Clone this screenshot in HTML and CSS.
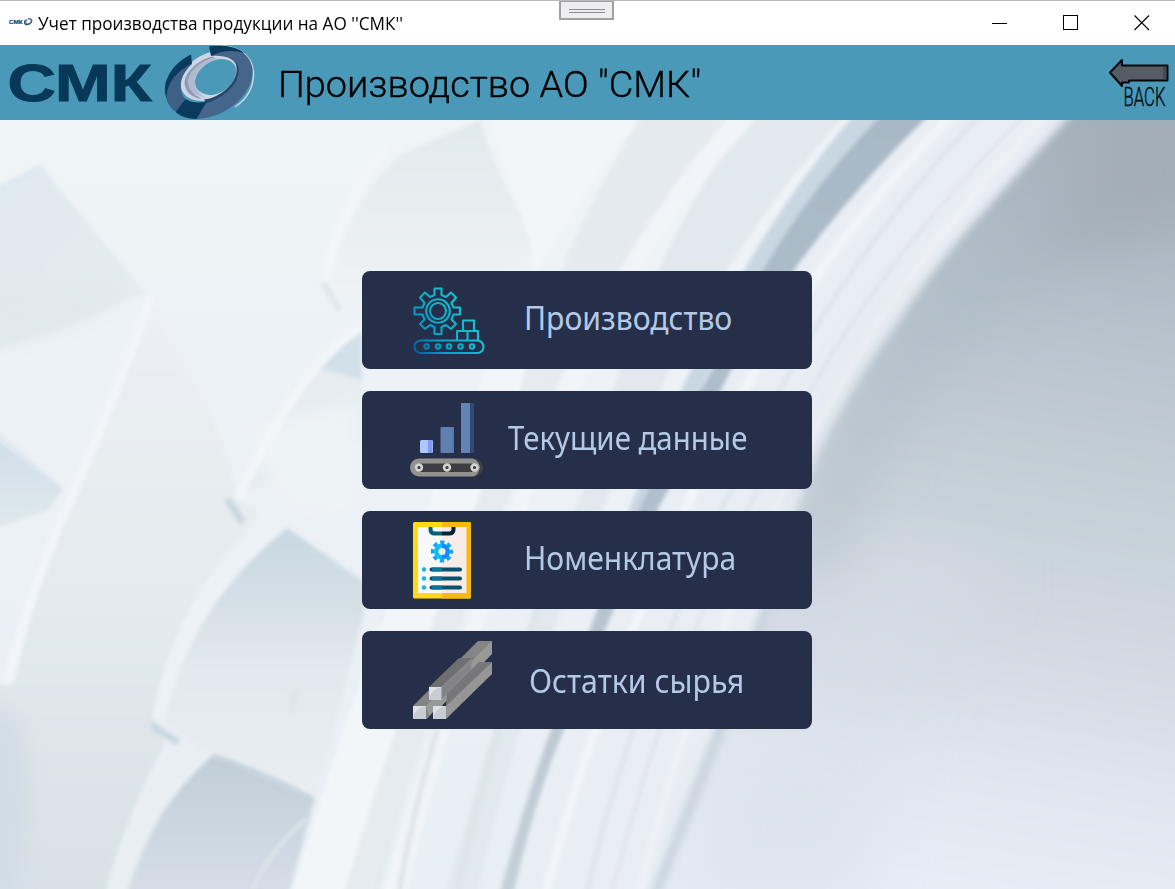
FILE: index.html
```html
<!DOCTYPE html>
<html lang="ru">
<head>
<meta charset="utf-8">
<title>Учет производства продукции на АО ''СМК''</title>
<link rel="stylesheet" href="styles.css">
</head>
<body>
<div class="window">
  <header class="titlebar">
    <svg class="app-icon" viewBox="0 0 250 80"><use href="#logo"/></svg>
    <span class="window-title"><span class="fit" id="t0">Учет производства продукции на АО ''СМК''</span></span>
    <div class="handle"><i></i><i></i></div>
    <div class="controls">
      <svg width="16" height="16" viewBox="0 0 16 16" shape-rendering="crispEdges"><path d="M0 8.5h15" stroke="#000"/></svg>
      <svg width="16" height="16" viewBox="0 0 16 16" shape-rendering="crispEdges"><path d="M.5 .5h14v14h-14z" fill="none" stroke="#000"/></svg>
      <svg width="16" height="16" viewBox="0 0 16 16"><path d="M.5 .5l14.500 14.500M15 .5L.5 15" stroke="#000" stroke-width="1.100"/></svg>
    </div>
  </header>

  <div class="banner">
    <svg class="logo" width="250" height="75" viewBox="0 0 250 75">
      <defs>
        <g id="logo">
          <text x="-1.500" y="56" class="logo-text" textLength="144" lengthAdjust="spacingAndGlyphs">СМК</text>
          <path fill="none" stroke="#c9d3e2" stroke-width="1.500" d="M206 1C226 -1 243 9 244.500 27C245 42 238 54 226 62"/>
          <path fill="#ced6e4" fill-rule="evenodd" d="M202 7C186 11 172 24 171.500 39C172 50 181 56 194 56C214 55 230 40 230 24C229 12 216 6 202 7ZM212 14C222 14 228 19 227 28C225 40 213 50 201 50C192 49 186 45 186 37C187 25 199 15 212 14Z"/>
          <path fill="#8e9bb7" d="M203 11.500C189 15 176 27 175.500 38C176 47 183 53 193 54C184 49 179 44 180 37C181 27 192 17 206 13Z"/>
          <path fill="#b0bacd" d="M203 13C190 17 178 28 179 38C180 46 187 51 197 52.500C190 49 186 45 186 37C187 25 199 15 212 14Z"/>
          <path fill="#45658a" d="M201 3C224 -2 241 7 243.500 24C245 48 219 73 187 74L198 56.500C216 53 229 38 228.500 24C227 13 215 10 203 11Z"/>
          <path fill="#26476b" d="M226 16C230 20 231 28 227 36C221 47 209 55 197 58L195 54.500C211 53 226 39 227.500 27C228 22 227 19 226 16Z"/>
          <path fill="#0a3a5d" d="M200 1.500C214 -1 228 2 235 8C225 5 213 5 202 11Z"/>
          <path fill="#0a3a5d" d="M182 9.500C166 17 155 32 156 47C157 54 160 60 166 66L170 59C165 49 166 30 183 18.500Z"/>
          <path fill="#3e6085" d="M183 18.500C163 28 156 45 158 55C160 61 163 65 167 67L176.500 54C169 45 170 31 183 19Z"/>
          <path fill="#0a3a5d" d="M176.500 54C183 58 191 58 198 56.500L187.500 74C178 74 171 71 166.500 67Z"/>
        </g>
      </defs>
      <use href="#logo"/>
    </svg>
    <h1 class="heading"><span class="fit" id="t1">Производство АО "СМК"</span></h1>
    <button class="back" aria-label="BACK">
      <svg width="66" height="56" viewBox="0 0 66 56">
        <path d="M1 14.500L13 2V7.500H58.500V22.500H20V24.500H13V28Z" fill="#565c64" stroke="#04080d" stroke-width="2" stroke-linejoin="round"/>
        <path d="M55.500 9V21.500" stroke="#3a424b" stroke-width="2"/>
        <text x="14.500" y="48" class="back-text" textLength="42" lengthAdjust="spacingAndGlyphs">BACK</text>
      </svg>
    </button>
  </div>

  <main class="stage">
    <svg class="backdrop" viewBox="0 120 1175 769" preserveAspectRatio="none" aria-hidden="true">
      <defs>
        <linearGradient id="base" x1="0" y1="0" x2="0" y2="1"><stop offset="0" stop-color="#eff4f7"/><stop offset=".5" stop-color="#ecf1f6"/><stop offset="1" stop-color="#e8eff5"/></linearGradient>
        <linearGradient id="inner" gradientUnits="userSpaceOnUse" x1="1080" y1="120" x2="960" y2="889"><stop offset="0" stop-color="#a5b1bb"/><stop offset=".13" stop-color="#adb9c4"/><stop offset=".3" stop-color="#b9c5cf"/><stop offset=".5" stop-color="#c7d1da"/><stop offset=".68" stop-color="#d3dae4"/><stop offset=".85" stop-color="#dfe6ef"/><stop offset="1" stop-color="#e5edf5"/></linearGradient>
        <linearGradient id="blade" x1="0" y1="0" x2="0" y2="1"><stop offset="0" stop-color="#c7d7e1"/><stop offset=".3" stop-color="#d6e0e6"/><stop offset=".5" stop-color="#e2e8ed"/><stop offset="1" stop-color="#e9eef3"/></linearGradient>
        <linearGradient id="blade2" x1="0" y1="0" x2="0" y2="1"><stop offset="0" stop-color="#c0ced8"/><stop offset="1" stop-color="#d7dee8"/></linearGradient>
        <linearGradient id="fin" x1="0" y1="0" x2="1" y2="1"><stop offset="0" stop-color="#dfe9f0"/><stop offset="1" stop-color="#e6ecef"/></linearGradient>
        <linearGradient id="topfin" x1="0" y1="0" x2="0" y2="1"><stop offset="0" stop-color="#e2e9ec"/><stop offset="1" stop-color="#eff3f6"/></linearGradient>
        <linearGradient id="corner" x1="0" y1="0" x2="0" y2="1"><stop offset="0" stop-color="#cfdee8"/><stop offset="1" stop-color="#e0e8eb"/></linearGradient>
        <linearGradient id="wide" gradientUnits="userSpaceOnUse" x1="0" y1="310" x2="0" y2="889"><stop offset="0" stop-color="#ecf0f4"/><stop offset=".5" stop-color="#e4eaee"/><stop offset="1" stop-color="#d8e1e6"/></linearGradient>
        <linearGradient id="stripe" gradientUnits="userSpaceOnUse" x1="0" y1="120" x2="0" y2="889"><stop offset="0" stop-color="#a9b8c6"/><stop offset=".5" stop-color="#b1bfcc"/><stop offset="1" stop-color="#c4d0d8"/></linearGradient>
        <filter id="b2"><feGaussianBlur stdDeviation="2.200"/></filter>
        <filter id="b5"><feGaussianBlur stdDeviation="4"/></filter>
        <filter id="b10" x="-20%" y="-20%" width="140%" height="140%"><feGaussianBlur stdDeviation="10"/></filter>
        <filter id="b20" x="-50%" y="-50%" width="200%" height="200%"><feGaussianBlur stdDeviation="28"/></filter>
      </defs>
      <rect x="0" y="120" width="1175" height="769" fill="url(#base)"/>

      <!-- left blades -->
      <g filter="url(#b2)">
        <path fill="url(#fin)" d="M-10 194L42 168L145 292L60 330L-10 350Z"/>
        <path fill="url(#wide)" d="M150 305Q215 400 238 498L285 530Q190 620 155 720L165 745Q120 820 112 900H-10V690L15 680Q40 560 75 490Q110 410 150 305Z"/>
        <path fill="url(#corner)" d="M-10 433L62 490L48 510L-10 530Z"/>
        <path fill="url(#topfin)" d="M330 280Q350 200 400 155L480 120Q500 190 545 250L500 275L362 310Z"/>
        <path fill="#e3eaee" d="M362 328Q320 350 300 390Q260 450 240 495L362 440V328Z" opacity=".6"/>
        <path fill="#d2e0e9" d="M362 328Q330 350 318 368L362 380Z"/>
        <path fill="url(#blade)" d="M287 528L370 586L352 660L315 797Q260 760 212 755L163 723Q185 610 287 528Z"/>
        <path fill="url(#blade2)" d="M212 756Q265 775 314 800L287 900H122Q150 810 212 756Z"/>
        <path fill="#edf2f6" d="M240 540L262 510L287 528Q190 605 165 720L152 717Q175 605 240 540Z"/>
        <path fill="#e9eff3" d="M183 742L210 750Q155 805 124 900H104Q125 800 183 742Z"/>
      </g>
      <g filter="url(#b10)">
        <path fill="#d2dbe6" d="M-20 700L20 720L30 800L15 900H-20Z"/>
        <path fill="#e0e7eb" d="M-10 290L130 295L60 330L-10 350Z" opacity=".7"/>
        <path fill="#eef3f6" d="M240 430L360 400V520L290 510Z"/>
      </g>
      <g filter="url(#b2)" fill="none" stroke-linecap="round">
        <path d="M150 300Q110 410 70 500Q30 590 8 680" stroke="#f1f5f9" stroke-width="10"/>
        <path d="M385 150Q340 205 325 280M360 328Q300 365 240 495" stroke="#f2f6f9" stroke-width="9"/>
        <path d="M324 284L338 308" stroke="#dce5e7" stroke-width="5"/>
        <path d="M229 502L241 520M154 727L176 741" stroke="#c8d6de" stroke-width="7"/>
        <path d="M0 188L42 166M-5 432L60 489" stroke="#cfdee8" stroke-width="2"/>
        <path d="M215 757Q270 775 312 799" stroke="#c0cdd6" stroke-width="4"/>
        <path d="M305 820Q270 850 253 889" stroke="#dfe5ec" stroke-width="4"/>
        <path d="M296 692L293 708" stroke="#dde3e7" stroke-width="6"/>
      </g>

      <!-- outer ring grooves -->
      <g filter="url(#b2)">
        <path fill="#f2f6f9" d="M485 110H645Q565 215 515 310Q380 590 290 900H370Q450 620 550 360L530 240Z"/>
        <path fill="#e2e7eb" d="M645 110H735Q610 265 545 410Q440 650 375 900H342Q420 640 515 405Q562 240 645 110Z" opacity=".75"/>
        <path fill="#dfe6ec" d="M760 110H850Q740 230 670 370Q540 610 475 900H445Q510 650 590 475Q650 230 760 110Z" opacity=".85"/>
        <path fill="#f1f4f8" d="M735 110H765Q640 240 590 370Q475 600 405 900H380Q450 650 545 420Q620 240 735 110Z"/>
        <path fill="#c9d7e2" d="M858 110H895Q800 215 750 300Q690 400 640 515L628 512Q670 405 725 305Q780 200 858 110Z"/>
        <path fill="url(#stripe)" d="M887 110H935Q850 190 798 275Q735 375 660 505Q595 650 552 760Q530 820 512 900H498Q535 760 588 635Q640 490 715 365Q780 215 887 110Z"/>
        <path fill="#e9eef5" d="M935 110H1080Q950 240 880 350Q790 480 750 615Q690 760 645 900H514Q550 760 602 640Q660 500 721 390Q790 250 935 110Z"/>
      </g>
      <g filter="url(#b2)" fill="none">
        <path d="M980 115Q860 240 780 390Q640 660 585 900" stroke="#dde5eb" stroke-width="5"/>
        <path d="M1025 115Q880 260 800 410Q680 620 610 900" stroke="#e1e3eb" stroke-width="4"/>
        <path d="M952 115Q830 240 750 380Q610 640 544 900" stroke="#f2f5f9" stroke-width="9"/>
        <path d="M1045 115Q900 270 820 420Q700 640 638 900" stroke="#eff3f7" stroke-width="8"/>
        <path d="M570 520Q500 700 455 900M440 720Q410 820 398 900" stroke="#dce4e8" stroke-width="5"/>
      </g>

      <!-- recessed centre -->
      <path filter="url(#b5)" fill="url(#inner)" d="M1080 105Q1020 170 968 229Q928 275 894 328Q855 380 820 450Q790 520 766 614Q720 710 652 900H1200V105Z"/>
      <g filter="url(#b20)">
        <path d="M1140 195Q1015 245 925 345Q850 440 815 565" fill="none" stroke="#a7b6c0" stroke-width="30" opacity=".7"/>
        <path d="M1120 110H1220V215L1030 260Z" fill="#9faab4" opacity=".7"/>
        <path d="M870 540L1000 570L900 720L790 700Z" fill="#d5dbe5" opacity=".7"/>
        <path d="M720 760L900 700L860 900H680Z" fill="#dce2eb" opacity=".8"/>
      </g>
      <path filter="url(#b5)" d="M775 585Q735 695 655 895" fill="none" stroke="#c3ced7" stroke-width="8"/>
    </svg>

    <nav class="menu">
      <button class="item">
        <svg class="icon" width="84" height="98" viewBox="0 0 84 98">
          <defs><linearGradient id="cy" gradientUnits="userSpaceOnUse" x1="2" y1="84" x2="60" y2="48"><stop offset="0" stop-color="#0a4d96"/><stop offset=".4" stop-color="#069fc4"/><stop offset="1" stop-color="#15c4d2"/></linearGradient></defs>
          <g fill="none" stroke="url(#cy)" stroke-width="2.100" stroke-linejoin="round">
            <path d="M24.500 17.500H31.500V24L36 26L41 21.500L46 26.500L41.500 32L43.500 36.500H50V43.500H43.500L41.500 48.500L46 53L41 58L36 54L31.500 56V63H24.500V56L20 54L15 58L10 53L14.500 48.500L12.500 43.500H4.500V36.500H12.500L14.500 32L10 26.500L15 21.500L20 26L24.500 24Z"/>
            <circle cx="28" cy="40" r="11.800"/><circle cx="28" cy="40" r="8"/>
            <rect x="4.500" y="69.500" width="69" height="12.500" rx="6.200"/>
            <circle cx="16.500" cy="75.500" r="2.200"/><circle cx="28" cy="75.500" r="2.200"/><circle cx="39" cy="75.500" r="2.200"/><circle cx="50.500" cy="75.500" r="2.200"/><circle cx="62" cy="75.500" r="2.200"/>
            <path d="M47 69V60H68V69M57.500 60V69M53 60V49.500H64V60"/>
          </g>
        </svg>
        <span class="label l1"><span class="fit" id="t2">Производство</span></span>
      </button>
      <button class="item">
        <svg class="icon" width="84" height="98" viewBox="0 0 84 98">
          <rect x="10" y="49" width="13" height="13" rx="1.500" fill="#b0c8ff"/><path d="M18 49h4.500v13H18z" fill="#809cf0"/>
          <rect x="30.500" y="36" width="13.500" height="26" rx="1" fill="#6080b0"/><rect x="42" y="36" width="2" height="26" fill="#587aab"/>
          <rect x="51" y="12" width="13" height="50" rx="1" fill="#304a75"/><rect x="51" y="12" width="9" height="50" rx="1" fill="#6484b5"/>
          <rect x="8" y="67.500" width="65" height="18" rx="9" fill="#414144"/>
          <path d="M9 67.500H62Q68 68 70 76.500Q68 85.500 62 85.500H9A9 9 0 0 1 9 67.500Z" fill="#92928f"/>
          <path d="M9 72.500H62L68 76.500L62 81H9Z" fill="#3e3e42"/>
          <g fill="#38383c" stroke="#d5d2d2" stroke-width="2.600"><circle cx="9" cy="76.500" r="2.900"/><circle cx="37" cy="76.500" r="2.900"/><circle cx="64.500" cy="76.500" r="2.900"/></g>
        </svg>
        <span class="label l2"><span class="fit" id="t3">Текущие данные</span></span>
      </button>
      <button class="item">
        <svg class="icon" width="84" height="98" viewBox="0 0 84 98">
          <rect x="3" y="11" width="58" height="76.500" rx="1.500" fill="#ffda15"/><path d="M32 11h27.500q1.500 0 1.500 1.500v73.500q0 1.500-1.500 1.500H32z" fill="#f4b914"/>
          <path d="M8 16h24v66H8z" fill="#f8f7f9"/><path d="M32 16h24.500v66H32z" fill="#f8ebe8"/>
          <path d="M20.500 16V18.500Q20.500 22.500 25 22.500H32" fill="none" stroke="#066078" stroke-width="4"/><path d="M32 22.500H39Q43.500 22.500 43.500 18.500V16" fill="none" stroke="#022638" stroke-width="4"/>
          <circle cx="32" cy="40.500" r="9.300" fill="none" stroke="#0ca8f5" stroke-width="3.600" stroke-dasharray="4.200 3.104" stroke-dashoffset="2.100"/>
          <path d="M32 32.500A8 8 0 0 0 32 48.500V44A3.500 3.500 0 0 1 32 37Z" fill="#0bbdf8"/><path d="M32 32.500A8 8 0 0 1 32 48.500V44A3.500 3.500 0 0 0 32 37Z" fill="#118cff"/>
          <g fill="#16b8d5"><circle cx="14" cy="58.500" r="2.200"/><circle cx="14" cy="67.500" r="2.200"/><circle cx="14" cy="76.500" r="2.200"/></g>
          <g stroke="#06516e" stroke-width="4" stroke-linecap="round"><path d="M21.500 58.500H50M21.500 67.500H50M21.500 76.500H50"/><path stroke="#0a749b" stroke-linecap="butt" d="M22 58.500H32M22 67.500H32M22 76.500H32"/></g>
        </svg>
        <span class="label l3"><span class="fit" id="t4">Номенклатура</span></span>
      </button>
      <button class="item">
        <svg class="icon" width="84" height="98" viewBox="0 0 84 98">
          <path d="M3 75L68 10H82L69 38L17 88H3Z" fill="#858585"/><path d="M82 10V23L20 87L16 75Z" fill="#999997"/>
          <path d="M19 56L49 27H64L31 56Z" fill="#6f6f71"/><path d="M31 56L62 27L61 39L31 69Z" fill="#87878c"/>
          <path d="M36 75L37 63L69 31H82L36 77Z" fill="#777779"/><path d="M36 75L82 31V43L36 88Z" fill="#969696"/>
          <path d="M31 69L61 37V34L31 57Z" fill="#828287"/>
          <path d="M17 88L23 81V88Z" fill="#262f49"/>
          <g fill="#c9ccd2"><path d="M3 75h13v13H3zM19 56h12.500v13H19zM23 75h13v13H23z"/></g>
          <g fill="#e1e1e2"><path d="M3 75h13q-11 2-13 12zM19 56h12.500q-10 2-12.500 12zM23 75h13q-11 2-13 12z"/></g>
        </svg>
        <span class="label l4"><span class="fit" id="t5">Остатки сырья</span></span>
      </button>
    </nav>
  </main>
</div>
<script src="fit.js"></script>
</body>
</html>
```
FILE: styles.css
```css
* { box-sizing: border-box; }
body { margin: 0; overflow: hidden; font-family: "Noto Sans", "Open Sans", sans-serif; }
button { border: 0; padding: 0; background: none; font: inherit; text-align: left; }
.window { width: 1175px; height: 889px; display: flex; flex-direction: column; }
.fit { display: inline-block; white-space: nowrap; transform-origin: 0 50%; }

.titlebar { position: relative; height: 45px; flex: none; display: flex; align-items: center; padding-left: 9px; background: #fff; border-top: 1px solid #bababa; }
.app-icon { width: 24px; height: 8px; margin-top: -2px; }
.window-title { flex: 1; margin-left: 5px; font: 18px/24px "Open Sans", sans-serif; color: #000; margin-top: -1px; }
.controls { display: flex; gap: 55px; padding-right: 25px; margin-top: -1px; }
.controls svg { display: block; width: 16px; }
.handle { position: absolute; left: 559px; top: 0; width: 55px; height: 19px; border: 2px solid #a0a0a2; border-top-width: 1px; background: #eeeef0; display: flex; flex-direction: column; align-items: center; gap: 2px; padding-top: 7px; }
.handle i { width: 36px; height: 1px; background: #8d8d90; }

.banner { height: 75px; flex: none; display: flex; align-items: center; background: #4a99b9; padding-left: 9px; }
.logo { display: block; overflow: visible; }
.logo-text { font: bold 51px "Liberation Sans", Arial, sans-serif; fill: #073858; stroke: #073858; stroke-width: 1; }
.heading { flex: 1; margin: 3px 0 0 19px; font: 300 37.500px/46px Roboto, sans-serif; color: #000; -webkit-text-stroke: .35px #000; }
.back { margin-top: 7px; display: block; }
.back svg { display: block; overflow: visible; }
.back-text { font: 300 25px Roboto, sans-serif; fill: #050b10; stroke: #050b10; stroke-width: .4; }

.stage { position: relative; flex: 1; min-height: 0; display: flex; flex-direction: column; align-items: center; padding-top: 151px; }
.backdrop { position: absolute; inset: 0; width: 100%; height: 100%; }
.menu { position: relative; display: grid; gap: 22px; margin-right: 1px; }
.item { width: 450px; height: 98px; border-radius: 8px; background: #262f49; display: flex; align-items: center; padding-left: 48px; color: #b4c9e6; }
.icon { flex: none; display: block; }
.label { font: 32px/44px "Noto Sans", sans-serif; margin-top: -5px; }
.l1, .l3 { margin-left: 30px; }
.l2 { margin-left: 14px; }
.l4 { margin-left: 35px; margin-top: 1px; }
```
FILE: fit.js
```js
// Scale each caption horizontally to its intended width.
const widths = { t0: 365, t1: 423, t2: 208, t3: 239, t4: 212, t5: 215 };
for (const [id, w] of Object.entries(widths)) {
  const el = document.getElementById(id);
  el.style.transform = `scaleX(${w / el.offsetWidth})`;
}
```
